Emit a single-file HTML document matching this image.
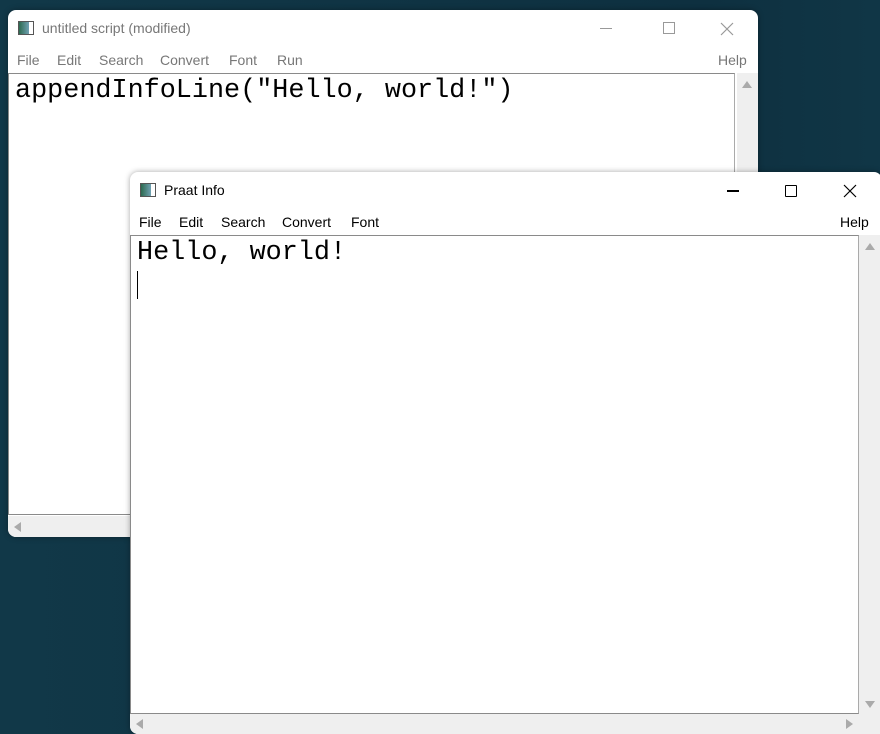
<!DOCTYPE html>
<html><head><style>
body{margin:0;width:880px;height:731px;overflow:hidden;background:linear-gradient(90deg,#113848,#0e3040 80%,#103646);font-family:"Liberation Sans",sans-serif;position:relative}
.win{position:absolute;background:#fff;border-radius:8px 8px 0 8px;overflow:hidden;box-shadow:0 0 6px rgba(0,0,0,.35)}
.title{position:absolute;left:0;top:0;right:0;height:36px;font-size:14px}
.ico{position:absolute;left:10px;top:11px;width:14px;height:12px;border:1px solid #555;background:linear-gradient(90deg,#2d6a50,#6fa0b0 70%,#fff 70%)}
.tt{position:absolute;left:34px;top:10px}
.menu{position:absolute;top:0;font-size:14px}
.menu span{position:absolute}
.ta{position:absolute;background:#fff;border:1px solid #8a8a8a;border-right-color:#aaa;font-family:"Liberation Mono","Courier New",monospace;font-size:26.8px;white-space:pre}
.sb{position:absolute;background:#efefef}
.tri{position:absolute;width:0;height:0}
svg{position:absolute}
</style></head><body>
<div class="win" style="left:8px;top:10px;width:750px;height:527px;border-radius:8px 8px 8px 8px">
 <div class="title" style="color:#777"><div class="ico"></div><div class="tt">untitled script (modified)</div>
  <div style="position:absolute;left:592px;top:18px;width:12px;height:1px;background:#999"></div>
  <div style="position:absolute;left:655px;top:12px;width:10px;height:10px;border:1px solid #999"></div>
  <svg style="left:712px;top:12px" width="14" height="14"><path d="M1 1L13 13M13 1L1 13" stroke="#999" stroke-width="1.2"/></svg>
 </div>
 <div class="menu" style="color:#777;left:0;top:42px;width:750px">
  <span style="left:9px">File</span><span style="left:49px">Edit</span><span style="left:91px">Search</span><span style="left:152px">Convert</span><span style="left:221px">Font</span><span style="left:269px">Run</span><span style="left:710px">Help</span>
 </div>
 <div class="ta" style="left:0;top:63px;width:727px;height:442px;padding:0 0 0 6px;line-height:34px;box-sizing:border-box">appendInfoLine("Hello, world!")</div>
 <div class="sb" style="left:729px;top:63px;width:21px;height:442px"></div>
 <div class="tri" style="left:734px;top:71px;border-left:5px solid transparent;border-right:5px solid transparent;border-bottom:7px solid #aaa"></div>
 <div class="sb" style="left:0;top:506px;width:750px;height:21px"></div>
 <div class="tri" style="left:6px;top:512px;border-top:5px solid transparent;border-bottom:5px solid transparent;border-right:7px solid #aaa"></div>
</div>
<div class="win" style="left:130px;top:172px;width:752px;height:562px">
 <div class="title" style="color:#000"><div class="ico"></div><div class="tt">Praat Info</div>
  <div style="position:absolute;left:597px;top:18px;width:12px;height:1.5px;background:#000"></div>
  <div style="position:absolute;left:655px;top:13px;width:10px;height:10px;border:1px solid #000;border-radius:1px"></div>
  <svg style="left:713px;top:12px" width="14" height="14"><path d="M1 1L13 13M13 1L1 13" stroke="#000" stroke-width="1.2"/></svg>
 </div>
 <div class="menu" style="color:#000;left:0;top:42px;width:752px">
  <span style="left:9px">File</span><span style="left:49px">Edit</span><span style="left:91px">Search</span><span style="left:152px">Convert</span><span style="left:221px">Font</span><span style="left:710px">Help</span>
 </div>
 <div class="ta" style="left:0;top:63px;width:729px;height:479px;padding:0 0 0 6px;line-height:34px;box-sizing:border-box">Hello, world!
<span style="display:inline-block;width:1px;height:28px;background:#000;vertical-align:-6px"></span></div>
 <div class="sb" style="left:729px;top:63px;width:23px;height:479px"></div>
 <div class="tri" style="left:735px;top:71px;border-left:5px solid transparent;border-right:5px solid transparent;border-bottom:7px solid #aaa"></div>
 <div class="tri" style="left:735px;top:529px;border-left:5px solid transparent;border-right:5px solid transparent;border-top:7px solid #aaa"></div>
 <div class="sb" style="left:0;top:542px;width:752px;height:20px"></div>
 <div class="tri" style="left:6px;top:547px;border-top:5px solid transparent;border-bottom:5px solid transparent;border-right:7px solid #aaa"></div>
 <div class="tri" style="left:716px;top:547px;border-top:5px solid transparent;border-bottom:5px solid transparent;border-left:7px solid #aaa"></div>
</div>
</body></html>
